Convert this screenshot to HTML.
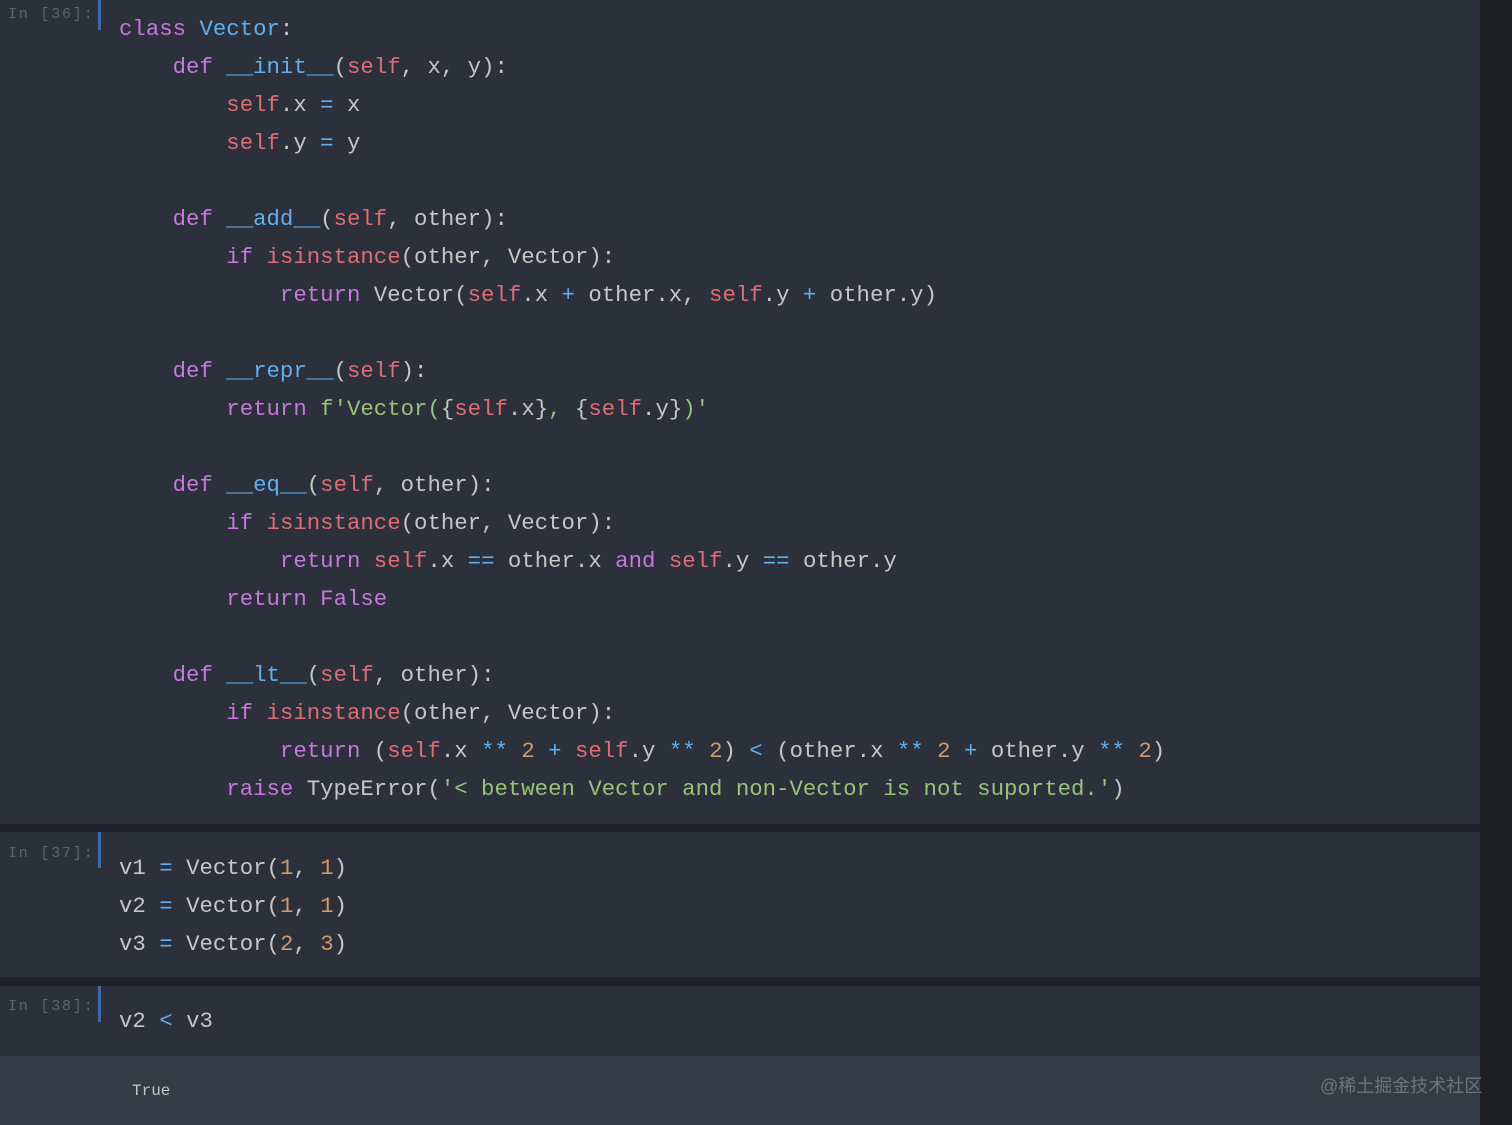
<!DOCTYPE html>
<html><head><meta charset="utf-8"><style>
html,body{margin:0;padding:0;width:1512px;height:1125px;overflow:hidden;background:#1c1e22;}
.cell{position:absolute;left:0;width:1480px;background:#2b303b;}
.sep{position:absolute;left:0;width:1480px;background:#1f2228;}
.prompt{position:absolute;left:8px;font:15px "Liberation Mono",monospace;color:#5d6470;letter-spacing:1.8px;}
.bar{position:absolute;left:98px;width:3px;background:#3b6aa8;}
pre{position:absolute;left:119px;margin:0;font:22.35px/38px "Liberation Mono",monospace;color:#c5c8c6;}
.k{color:#c678dd}.b{color:#61afef}.s{color:#e06c75}.n{color:#d19a66}.g{color:#98c379}.o{color:#61afef}
.out{position:absolute;left:0;top:1056px;width:1480px;height:69px;background:#353b46;}
</style></head><body>
<div class="cell" style="top:0;height:824px"></div>
<div class="sep" style="top:824px;height:8px"></div>
<div class="cell" style="top:832px;height:145px"></div>
<div class="sep" style="top:977px;height:9px"></div>
<div class="cell" style="top:986px;height:70px"></div>
<div class="out"></div>

<div class="prompt" style="top:6px">In [36]:</div>
<div class="bar" style="top:0;height:30px"></div>
<pre style="top:10px"><span class="k">class</span> <span class="b">Vector</span>:
    <span class="k">def</span> <span class="b">__init__</span>(<span class="s">self</span>, x, y):
        <span class="s">self</span>.x <span class="o">=</span> x
        <span class="s">self</span>.y <span class="o">=</span> y

    <span class="k">def</span> <span class="b">__add__</span>(<span class="s">self</span>, other):
        <span class="k">if</span> <span class="s">isinstance</span>(other, Vector):
            <span class="k">return</span> Vector(<span class="s">self</span>.x <span class="o">+</span> other.x, <span class="s">self</span>.y <span class="o">+</span> other.y)

    <span class="k">def</span> <span class="b">__repr__</span>(<span class="s">self</span>):
        <span class="k">return</span> <span class="g">f'Vector(</span>{<span class="s">self</span>.x}<span class="g">, </span>{<span class="s">self</span>.y}<span class="g">)'</span>

    <span class="k">def</span> <span class="b">__eq__</span>(<span class="s">self</span>, other):
        <span class="k">if</span> <span class="s">isinstance</span>(other, Vector):
            <span class="k">return</span> <span class="s">self</span>.x <span class="o">==</span> other.x <span class="k">and</span> <span class="s">self</span>.y <span class="o">==</span> other.y
        <span class="k">return</span> <span class="k">False</span>

    <span class="k">def</span> <span class="b">__lt__</span>(<span class="s">self</span>, other):
        <span class="k">if</span> <span class="s">isinstance</span>(other, Vector):
            <span class="k">return</span> (<span class="s">self</span>.x <span class="o">**</span> <span class="n">2</span> <span class="o">+</span> <span class="s">self</span>.y <span class="o">**</span> <span class="n">2</span>) <span class="o">&lt;</span> (other.x <span class="o">**</span> <span class="n">2</span> <span class="o">+</span> other.y <span class="o">**</span> <span class="n">2</span>)
        <span class="k">raise</span> TypeError(<span class="g">'&lt; between Vector and non-Vector is not suported.'</span>)</pre>

<div class="prompt" style="top:845px">In [37]:</div>
<div class="bar" style="top:832px;height:36px"></div>
<pre style="top:849px">v1 <span class="o">=</span> Vector(<span class="n">1</span>, <span class="n">1</span>)
v2 <span class="o">=</span> Vector(<span class="n">1</span>, <span class="n">1</span>)
v3 <span class="o">=</span> Vector(<span class="n">2</span>, <span class="n">3</span>)</pre>

<div class="prompt" style="top:998px">In [38]:</div>
<div class="bar" style="top:986px;height:36px"></div>
<pre style="top:1002px">v2 <span class="o">&lt;</span> v3</pre>

<div style="position:absolute;left:132px;top:1082px;font:16px 'Liberation Mono',monospace;color:#c5c8c6">True</div>
<div style="position:absolute;left:1320px;top:1072px;font:18px 'Liberation Sans','Noto Sans CJK SC',sans-serif;color:#6e737c;white-space:nowrap">@稀土掘金技术社区</div>
</body></html>
